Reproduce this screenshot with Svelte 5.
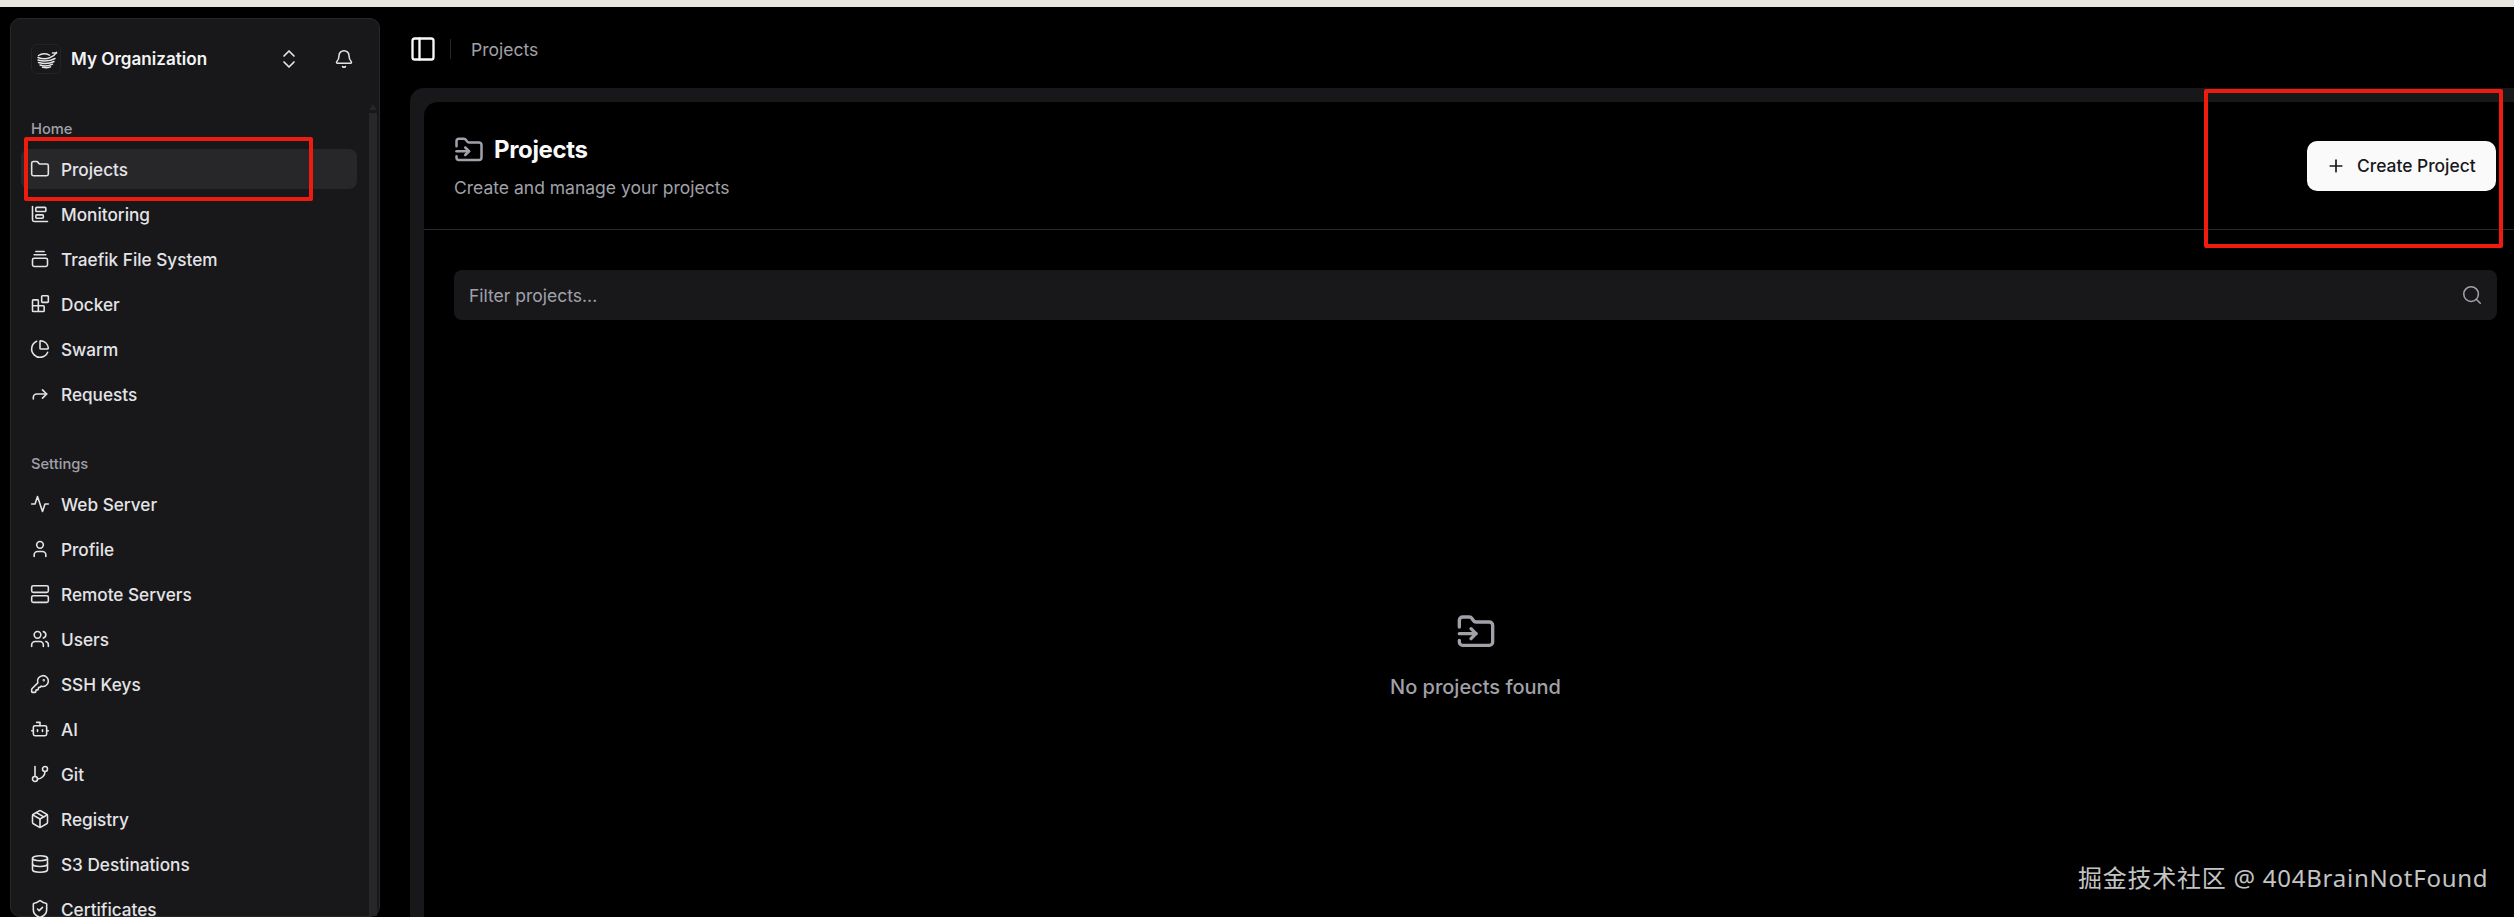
<script>
  const homeItems = [
    { label: "Projects", icon: "folder", active: true },
    { label: "Monitoring", icon: "chart" },
    { label: "Traefik File System", icon: "stack" },
    { label: "Docker", icon: "blocks" },
    { label: "Swarm", icon: "pie" },
    { label: "Requests", icon: "forward" },
  ];

  const settingsItems = [
    { label: "Web Server", icon: "activity" },
    { label: "Profile", icon: "user" },
    { label: "Remote Servers", icon: "server" },
    { label: "Users", icon: "users" },
    { label: "SSH Keys", icon: "key" },
    { label: "AI", icon: "bot" },
    { label: "Git", icon: "git" },
    { label: "Registry", icon: "package" },
    { label: "S3 Destinations", icon: "database" },
    { label: "Certificates", icon: "shield" },
  ];

  // lucide style outlines on a 24 box
  const icons = {
    folder: `<path d="M20 20a2 2 0 0 0 2-2V8a2 2 0 0 0-2-2h-7.9a2 2 0 0 1-1.69-.9L9.6 3.9A2 2 0 0 0 7.93 3H4a2 2 0 0 0-2 2v13a2 2 0 0 0 2 2Z"/>`,
    chart: `<path d="M3 3v16a2 2 0 0 0 2 2h16"/><rect x="7" y="4" width="12" height="5" rx="1"/><rect x="7" y="13" width="9" height="4" rx="1"/>`,
    stack: `<path d="M7 3h10"/><path d="M5 7h14"/><rect x="3" y="11" width="18" height="10" rx="2"/>`,
    blocks: `<rect x="14" y="2" width="8" height="8" rx="1"/><path d="M10 21V8a1 1 0 0 0-1-1H4a1 1 0 0 0-1 1v12a1 1 0 0 0 1 1h12a1 1 0 0 0 1-1v-5a1 1 0 0 0-1-1H3"/>`,
    pie: `<path d="M21 12c.55 0 1-.45.95-1A10 10 0 0 0 13 2.05c-.55-.05-1 .4-1 .95v8a1 1 0 0 0 1 1z"/><path d="M21.2 15.9A10 10 0 1 1 8 2.8"/>`,
    forward: `<path d="m15 17 5-5-5-5"/><path d="M4 18v-2a4 4 0 0 1 4-4h12"/>`,
    activity: `<path d="M22 12h-4l-3 9L9 3l-3 9H2"/>`,
    user: `<circle cx="12" cy="7" r="4"/><path d="M19 21v-2a4 4 0 0 0-4-4H9a4 4 0 0 0-4 4v2"/>`,
    server: `<rect x="2" y="2" width="20" height="8" rx="2"/><rect x="2" y="14" width="20" height="8" rx="2"/>`,
    users: `<path d="M16 21v-2a4 4 0 0 0-4-4H6a4 4 0 0 0-4 4v2"/><circle cx="9" cy="7" r="4"/><path d="M22 21v-2a4 4 0 0 0-3-3.87"/><path d="M16 3.13a4 4 0 0 1 0 7.75"/>`,
    key: `<path d="M2.59 17.41A2 2 0 0 0 2 18.83V21a1 1 0 0 0 1 1h3a1 1 0 0 0 1-1v-1a1 1 0 0 1 1-1h1a1 1 0 0 0 1-1v-1a1 1 0 0 1 1-1h.17a2 2 0 0 0 1.42-.59l.81-.81a6.5 6.5 0 1 0-4-4z"/><circle cx="16.5" cy="7.5" r=".5"/>`,
    bot: `<path d="M12 8V4H8"/><rect x="4" y="8" width="16" height="12" rx="2"/><path d="M2 14h2"/><path d="M20 14h2"/><path d="M15 13v2"/><path d="M9 13v2"/>`,
    git: `<path d="M6 3v12"/><circle cx="18" cy="6" r="3"/><circle cx="6" cy="18" r="3"/><path d="M18 9a9 9 0 0 1-9 9"/>`,
    package: `<path d="M21 8a2 2 0 0 0-1-1.73l-7-4a2 2 0 0 0-2 0l-7 4A2 2 0 0 0 3 8v8a2 2 0 0 0 1 1.73l7 4a2 2 0 0 0 2 0l7-4A2 2 0 0 0 21 16Z"/><path d="m3.3 7 8.7 5 8.7-5"/><path d="M12 22V12"/><path d="m7.5 4.27 9 5.15"/>`,
    database: `<ellipse cx="12" cy="5" rx="9" ry="3"/><path d="M3 5v14a9 3 0 0 0 18 0V5"/><path d="M3 12a9 3 0 0 0 18 0"/>`,
    shield: `<path d="M20 13c0 5-3.5 7.5-7.66 8.95a1 1 0 0 1-.67-.01C7.5 20.5 4 18 4 13V6a1 1 0 0 1 1-1c2 0 4.5-1.2 6.24-2.72a1.17 1.17 0 0 1 1.52 0C14.51 3.81 17 5 19 5a1 1 0 0 1 1 1z"/><path d="m9 12 2 2 4-4"/>`,
    folderIn: `<path d="M2 9V5a2 2 0 0 1 2-2h3.9a2 2 0 0 1 1.69.9l.81 1.2a2 2 0 0 0 1.67.9H20a2 2 0 0 1 2 2v10a2 2 0 0 1-2 2H4a2 2 0 0 1-2-2v-1"/><path d="M2 13h10"/><path d="m9 16 3-3-3-3"/>`,
  };
</script>

<div class="page">
  <div class="strip"></div>
  <div class="layout">
    <aside class="sidebar">
      <header class="org">
        <div class="logo">
          <svg viewBox="0 0 30 30" width="30" height="30" fill="none" stroke="#e4e4e7" stroke-width="1.5" stroke-linecap="round">
            <path d="M7.500 11.500c3-2 7.500-2 11-.3"/>
            <path d="M7 13.500c4 1.500 9 1.500 12.500-.2 2.500-.8 4.500-2.500 6-5"/>
            <path d="M7 16c4.500 1.500 11 1.500 17-1.500"/>
            <path d="M7.500 18.500c4.500 1.300 11 1.300 15.500-1"/>
            <path d="M9 21c4 1.200 9 1.200 12.500-.8"/>
            <path d="M11.500 23.300c2.500.6 5.500.6 8-.4"/>
            <path d="M21.500 9h4"/>
          </svg>
        </div>
        <span class="org-name">My Organization</span>
        <svg class="chevrons" viewBox="0 0 24 24" width="24" height="24" fill="none" stroke="#e4e4e7" stroke-width="1.7" stroke-linecap="round" stroke-linejoin="round">
          <path d="m7 15 5 5 5-5"/><path d="m7 9 5-5 5 5"/>
        </svg>
        <svg class="bell" viewBox="0 0 24 24" width="20" height="20" fill="none" stroke="#e4e4e7" stroke-width="1.8" stroke-linecap="round" stroke-linejoin="round">
          <path d="M10.268 21a2 2 0 0 0 3.464 0"/>
          <path d="M3.262 15.326A1 1 0 0 0 4 17h16a1 1 0 0 0 .74-1.673C19.410 13.956 18 12.499 18 8A6 6 0 0 0 6 8c0 4.499-1.411 5.956-2.738 7.326"/>
        </svg>
      </header>

      <div class="body">
        <nav class="nav">
          <div class="group-label">Home</div>
          {#each homeItems as item}
            <div class="item" class:active={item.active}>
              <svg viewBox="0 0 24 24" width="20" height="20" fill="none" stroke="currentColor" stroke-width="1.9" stroke-linecap="round" stroke-linejoin="round">{@html icons[item.icon]}</svg>
              <span>{item.label}</span>
            </div>
          {/each}

          <div class="group-label second">Settings</div>
          {#each settingsItems as item}
            <div class="item">
              <svg viewBox="0 0 24 24" width="20" height="20" fill="none" stroke="currentColor" stroke-width="1.9" stroke-linecap="round" stroke-linejoin="round">{@html icons[item.icon]}</svg>
              <span>{item.label}</span>
            </div>
          {/each}
        </nav>
        <div class="scrollbar"></div>
      </div>
    </aside>

    <main class="main">
      <div class="topbar">
        <svg viewBox="0 0 24 24" width="28" height="28" fill="none" stroke="#fafafa" stroke-width="2" stroke-linecap="round" stroke-linejoin="round">
          <rect x="3" y="3" width="18" height="18" rx="2"/><path d="M9 3v18"/>
        </svg>
        <div class="sep"></div>
        <span class="crumb">Projects</span>
      </div>

      <div class="frame">
        <div class="panel">
          <div class="panel-head">
            <div>
              <div class="title-row">
                <svg class="muted-icon" viewBox="0 0 24 24" width="30" height="30" fill="none" stroke="currentColor" stroke-width="2" stroke-linecap="round" stroke-linejoin="round">{@html icons.folderIn}</svg>
                <h1>Projects</h1>
              </div>
              <p class="subtitle">Create and manage your projects</p>
            </div>
            <button class="create">
              <svg viewBox="0 0 24 24" width="20" height="20" fill="none" stroke="#18181b" stroke-width="2" stroke-linecap="round"><path d="M5 12h14"/><path d="M12 5v14"/></svg>
              Create Project
            </button>
          </div>

          <div class="panel-body">
            <div class="filter">
              <span>Filter projects...</span>
              <svg viewBox="0 0 24 24" width="22" height="22" fill="none" stroke="#a1a1aa" stroke-width="1.7" stroke-linecap="round" stroke-linejoin="round">
                <path d="m21 21-4.340-4.340"/><circle cx="11" cy="11" r="8"/>
              </svg>
            </div>
            <div class="empty">
              <svg class="muted-icon" viewBox="0 0 24 24" width="40" height="40" fill="none" stroke="currentColor" stroke-width="2" stroke-linecap="round" stroke-linejoin="round">{@html icons.folderIn}</svg>
              <span>No projects found</span>
            </div>
          </div>
        </div>
      </div>
    </main>
  </div>

  <div class="mark mark-nav"></div>
  <div class="mark mark-create"></div>
  <div class="watermark">掘金技术社区 @ 404BrainNotFound</div>
</div>

<style>
  :global(body) {
    margin: 0;
    background: #000;
    overflow: hidden;
  }

  .page {
    position: relative;
    width: 2514px;
    height: 917px;
    overflow: hidden;
    background: #000;
    font-family: Inter, "Noto Sans CJK SC", sans-serif;
    color: #fafafa;
  }

  .strip {
    height: 7px;
    background: #e9e6df;
  }

  .layout {
    display: flex;
    height: 910px;
  }

  .sidebar {
    flex: none;
    width: 370px;
    box-sizing: border-box;
    margin: 11px 0 0 10px;
    background: #18181b;
    border: 1px solid #27272a;
    border-radius: 10px;
    display: flex;
    flex-direction: column;
  }

  .org {
    display: flex;
    align-items: center;
    height: 80px;
    padding: 0 25px 0 20px;
    flex: none;
  }

  .logo {
    width: 30px;
    height: 30px;
    margin-right: 10px;
    border: 1px solid #232326;
    border-radius: 6px;
    box-sizing: border-box;
    display: flex;
    align-items: center;
    justify-content: center;
    overflow: hidden;
    flex: none;
  }

  .logo svg {
    flex: none;
  }

  .org-name {
    font-size: 17.1px;
    font-weight: 600;
    color: #f4f4f5;
    flex: 1;
    position: relative;
    top: -1px;
  }

  .chevrons {
    margin-right: 33px;
  }

  .body {
    display: flex;
    flex: 1;
    min-height: 0;
  }

  .nav {
    flex: 1;
    padding: 0 12px 0 10px;
  }

  .scrollbar {
    position: relative;
    width: 8px;
    margin: 14px 2px 0 0;
    background: #27272a;
  }

  .scrollbar::before {
    content: "";
    position: absolute;
    left: 0;
    top: -9px;
    border-left: 4px solid transparent;
    border-right: 4px solid transparent;
    border-bottom: 6px solid #27272a;
  }

  .group-label {
    height: 20px;
    line-height: 20px;
    margin-top: 20px;
    margin-bottom: 10px;
    padding-left: 10px;
    font-size: 14.7px;
    font-weight: 500;
    color: #a1a1aa;
  }

  .group-label.second {
    margin-top: 40px;
    margin-bottom: 10px;
  }

  .item {
    display: flex;
    align-items: center;
    gap: 11px;
    height: 40px;
    margin-bottom: 5px;
    padding-left: 9px;
    border-radius: 8px;
    font-size: 17.2px;
    font-weight: 450;
    color: #e4e4e7;
  }

  .item.active {
    background: #27272a;
  }

  .main {
    flex: 1;
    min-width: 0;
    margin-left: 30px;
  }

  .topbar {
    display: flex;
    align-items: center;
    height: 81px;
    box-sizing: border-box;
    padding-top: 3px;
    margin-left: -1px;
  }

  .sep {
    width: 1px;
    height: 20px;
    margin: 0 20px 0 13px;
    background: #27272a;
  }

  .crumb {
    font-size: 17.5px;
    color: #a1a1aa;
  }

  .frame {
    background: #18181b;
    border-radius: 14px 0 0 0;
    padding: 14px 0 0 14px;
    height: 829px;
    box-sizing: border-box;
  }

  .panel {
    background: #000;
    border-radius: 14px 0 0 0;
    height: 100%;
    display: flex;
    flex-direction: column;
  }

  .panel-head {
    display: flex;
    align-items: center;
    justify-content: space-between;
    height: 127px;
    padding: 0 18px 0 30px;
    border-bottom: 1px solid #27272a;
    flex: none;
  }

  .title-row {
    display: flex;
    align-items: center;
    gap: 10px;
    height: 32px;
  }

  .muted-icon {
    color: #a1a1aa;
  }

  h1 {
    margin: 0;
    font-size: 24px;
    font-weight: 650;
    letter-spacing: -0.35px;
  }

  .subtitle {
    margin: 11px 0 0;
    font-size: 17.5px;
    color: #a1a1aa;
  }

  .create {
    display: flex;
    align-items: center;
    gap: 11px;
    width: 189px;
    height: 50px;
    padding: 0 0 0 19px;
    border: none;
    border-radius: 10px;
    background: #fafafa;
    color: #18181b;
    font-family: inherit;
    font-size: 17.4px;
    font-weight: 500;
    white-space: nowrap;
  }

  .panel-body {
    flex: 1;
    padding: 40px 17px 0 30px;
    display: flex;
    flex-direction: column;
  }

  .filter {
    display: flex;
    align-items: center;
    justify-content: space-between;
    height: 50px;
    padding: 0 14px 0 15px;
    border-radius: 8px;
    background: #18181b;
    font-size: 17.5px;
    color: #a1a1aa;
    flex: none;
  }

  .empty {
    display: flex;
    flex-direction: column;
    align-items: center;
    gap: 23px;
    margin-top: 292px;
    font-size: 20px;
    font-weight: 500;
    color: #a1a1aa;
  }

  .mark {
    position: absolute;
    box-sizing: border-box;
    border: 4px solid #ee1c0e;
    border-radius: 2px;
  }

  .mark-nav {
    left: 24px;
    top: 137px;
    width: 289px;
    height: 64px;
  }

  .mark-create {
    left: 2204px;
    top: 89px;
    width: 299px;
    height: 159px;
  }

  .watermark {
    position: absolute;
    left: 2078px;
    top: 859px;
    font-family: "Noto Sans", "Noto Sans CJK SC", sans-serif;
    font-size: 24px;
    letter-spacing: 0.75px;
    color: #c4c4c4;
    white-space: nowrap;
  }
</style>
